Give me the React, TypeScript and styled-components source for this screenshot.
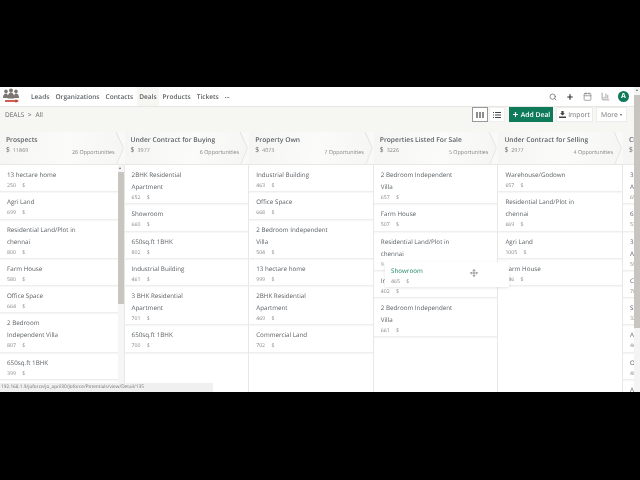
import React from "react";
import styled, { createGlobalStyle } from "styled-components";
import { Calendar, ChartColumn, Move, Plus, Search } from "lucide-react";

const GlobalStyle = createGlobalStyle`
  html, body { margin: 0; padding: 0; background: #000; }
  body {
    font-family: "Open Sans", "Liberation Sans", sans-serif;
    text-rendering: geometricPrecision;
  }
`;

const Page = styled.div`
  width: 640px;
  height: 480px;
  display: flex;
  flex-direction: column;
  background: #000;
  overflow: hidden;
`;

const Letterbox = styled.div<{ $height: number }>`
  height: ${(p) => p.$height}px;
  flex: none;
`;

const Screen = styled.div`
  position: relative;
  height: 305px;
  display: flex;
  background: #fff;
  overflow: hidden;
  color: #555;
  filter: blur(0.3px);
`;

const Main = styled.div`
  width: 634px;
  display: flex;
  flex-direction: column;
`;

const Nav = styled.div`
  height: 20px;
  display: flex;
  align-items: stretch;
  border-bottom: 1px solid #e6e6e2;
  box-sizing: border-box;
`;

const Logo = styled.svg`
  width: 18px;
  height: 16px;
  margin: 1px 9px 0 2px;
`;

const NavItem = styled.div<{ $active?: boolean }>`
  display: flex;
  align-items: center;
  padding: 0 2px;
  margin-right: 2px;
  font-size: 6.55px;
  font-weight: 600;
  color: #5a5f62;
  background: ${(p) => (p.$active ? "#f6f6f2" : "transparent")};
`;

const NavDots = styled(NavItem)`
  font-size: 4px;
  letter-spacing: 0.1px;
  padding-top: 3px;
`;

const NavIcons = styled.div`
  margin-left: auto;
  display: flex;
  align-items: center;
  gap: 9px;
  padding-right: 5px;
  color: #666;
`;

const Avatar = styled.div`
  width: 11px;
  height: 11px;
  margin-left: -1px;
  border-radius: 50%;
  background: #0f7a5a;
  color: #fff;
  font-size: 7px;
  font-weight: 700;
  display: flex;
  align-items: center;
  justify-content: center;
`;

const SubBar = styled.div`
  height: 20px;
  display: flex;
  align-items: center;
  padding: 0 7px 5px 5px;
  box-sizing: border-box;
  background: #f6f6f2;
  font-size: 6.5px;
  color: #666;
`;

const Crumb = styled.span`
  margin-right: 4px;
`;

const Actions = styled.div`
  margin-left: auto;
  display: flex;
  align-items: center;
`;

const ToggleButton = styled.div<{ $active?: boolean }>`
  width: 16px;
  height: 15px;
  margin-left: 1px;
  display: flex;
  align-items: center;
  justify-content: center;
  background: #fff;
  border: 1px solid ${(p) => (p.$active ? "#9a9a9a" : "#f0f0ec")};
  box-sizing: border-box;
  color: #444;
`;

const ActionButton = styled.div<{ $primary?: boolean; $width: number }>`
  width: ${(p) => p.$width}px;
  height: 15px;
  margin-left: ${(p) => (p.$primary ? 4 : 3)}px;
  box-sizing: border-box;
  display: flex;
  align-items: center;
  justify-content: center;
  gap: 2px;
  font-size: 6.8px;
  font-weight: ${(p) => (p.$primary ? 600 : 400)};
  color: ${(p) => (p.$primary ? "#fff" : "#777")};
  background: ${(p) => (p.$primary ? "#0f7a5a" : "#fff")};
  border: 1px solid ${(p) => (p.$primary ? "#0f7a5a" : "#ececea")};
`;

const Caret = styled.span`
  width: 0;
  height: 0;
  border-left: 1.5px solid transparent;
  border-right: 1.5px solid transparent;
  border-top: 2px solid #555;
`;

const Board = styled.div`
  flex: 1;
  min-height: 0;
  display: grid;
  grid-template-columns: repeat(6, 124.6px);
  grid-template-rows: 38px 1fr;
  overflow: hidden;
  background: #fff;
`;

const HeaderBand = styled.div`
  background: #f6f6f2;
  padding-top: 5px;
`;

const Header = styled.div`
  position: relative;
  box-sizing: border-box;
  height: 33px;
  padding: 3px 6px 0;
  background: linear-gradient(100deg, #f5f5f3 0%, #fbfbfa 55%, #f5f5f3 100%);
  border-bottom: 1px solid #e8e8e6;
`;

const HeaderTitle = styled.div`
  font-size: 6.7px;
  font-weight: 600;
  line-height: 9.5px;
  color: #5d6266;
  white-space: nowrap;
`;

const HeaderInfo = styled.div`
  display: flex;
  justify-content: space-between;
  align-items: flex-start;
  padding-right: 4px;
  color: #888;
  font-size: 5.4px;
  line-height: 10px;
  white-space: nowrap;
`;

const OpportunityCount = styled.span`
  margin-top: 2px;
`;

const Dollar = styled.span`
  font-size: 6.8px;
  margin-right: 3px;
  color: #666;
`;

const Chevron = styled.svg`
  position: absolute;
  top: 0;
  right: 0;
  width: 9px;
  height: 32px;
`;

const Column = styled.div<{ $last?: boolean }>`
  position: relative;
  min-width: 0;
  border-right: ${(p) => (p.$last ? "none" : "1px solid #e8e8e6")};
  overflow: hidden;
`;

const Card = styled.div<{ $inset?: boolean }>`
  padding: 4px 0 0 7px;
  margin-right: ${(p) => (p.$inset ? "6px" : "0")};
  border-bottom: 1px solid #eeeeec;
  box-shadow: 0 1px 1px rgba(0, 0, 0, 0.03);
  box-sizing: border-box;
`;

const CardTitle = styled.div`
  font-size: 6.25px;
  line-height: 12px;
  color: #5d6266;
  white-space: pre-line;
`;

const CardPrice = styled.div`
  font-size: 5.2px;
  line-height: 9px;
  height: 10.3px;
  color: #8a8a8a;
  word-spacing: 5px;
`;

const ScrollTrack = styled.div`
  position: absolute;
  top: 0;
  right: 0;
  width: 6px;
  height: 100%;
  background: #f6f6f6;
`;

const ScrollArrow = styled.div`
  position: absolute;
  top: 2px;
  left: 1.5px;
  width: 0;
  height: 0;
  border-left: 1.5px solid transparent;
  border-right: 1.5px solid transparent;
  border-bottom: 2px solid #666;
`;

const ScrollThumb = styled.div<{ $height: number; $top: number }>`
  margin-top: ${(p) => p.$top}px;
  height: ${(p) => p.$height}px;
  background: #c8c4c0;
`;

const PageScrollbar = styled.div`
  position: relative;
  width: 6px;
  background: #f4f4f4;
`;

const DragCard = styled.div`
  position: absolute;
  left: 385px;
  top: 175px;
  width: 124px;
  height: 25px;
  box-sizing: border-box;
  padding: 3px 0 0 6px;
  background: #fff;
  box-shadow: 0 1px 3px rgba(0, 0, 0, 0.1);
`;

const DragTitle = styled(CardTitle)`
  color: #1f8a64;
  font-weight: 500;
`;

const MoveMark = styled.div`
  position: absolute;
  right: 31px;
  top: 7px;
  color: #555;
  display: flex;
`;

const StatusBar = styled.div`
  position: absolute;
  left: 0;
  bottom: 0;
  width: 213px;
  height: 9px;
  padding-left: 1px;
  box-sizing: border-box;
  background: #f0f0f0;
  color: #777;
  font-size: 4.75px;
  line-height: 9px;
`;

type Deal = { title: string; price: string };

const columns: { name: string; total: string; count: string; deals: Deal[] }[] = [
  {
    name: "Prospects",
    total: "11869",
    count: "26 Opportunities",
    deals: [
      { title: "13 hectare home", price: "250 $" },
      { title: "Agri Land", price: "699 $" },
      { title: "Residential Land/Plot in\nchennai", price: "800 $" },
      { title: "Farm House", price: "580 $" },
      { title: "Office Space", price: "664 $" },
      { title: "2 Bedroom\nIndependent Villa", price: "807 $" },
      { title: "650sq.ft 1BHK", price: "399 $" },
    ],
  },
  {
    name: "Under Contract for Buying",
    total: "3977",
    count: "6 Opportunities",
    deals: [
      { title: "2BHK Residential\nApartment", price: "652 $" },
      { title: "Showroom", price: "660 $" },
      { title: "650sq.ft 1BHK", price: "802 $" },
      { title: "Industrial Building", price: "461 $" },
      { title: "3 BHK Residential\nApartment", price: "701 $" },
      { title: "650sq.ft 1BHK", price: "700 $" },
    ],
  },
  {
    name: "Property Own",
    total: "4073",
    count: "7 Opportunities",
    deals: [
      { title: "Industrial Building", price: "463 $" },
      { title: "Office Space", price: "668 $" },
      { title: "2 Bedroom Independent\nVilla", price: "504 $" },
      { title: "13 hectare home", price: "999 $" },
      { title: "2BHK Residential\nApartment", price: "469 $" },
      { title: "Commercial Land", price: "702 $" },
    ],
  },
  {
    name: "Properties Listed For Sale",
    total: "3226",
    count: "5 Opportunities",
    deals: [
      { title: "2 Bedroom Independent\nVilla", price: "657 $" },
      { title: "Farm House", price: "507 $" },
      { title: "Residential Land/Plot in\nchennai", price: "9" },
      { title: "Industrial Building", price: "402 $" },
      { title: "2 Bedroom Independent\nVilla", price: "661 $" },
    ],
  },
  {
    name: "Under Contract for Selling",
    total: "2977",
    count: "4 Opportunities",
    deals: [
      { title: "Warehouse/Godown", price: "657 $" },
      { title: "Residential Land/Plot in\nchennai", price: "669 $" },
      { title: "Agri Land", price: "1005 $" },
      { title: "Farm House", price: "346 $" },
    ],
  },
  {
    name: "Closed",
    total: "5210",
    count: "9 Opportunities",
    deals: [
      { title: "3 BHK Residential\nApartment", price: "651 $" },
      { title: "650sq.ft 1BHK", price: "530 $" },
      { title: "3 BHK Residential\nApartment", price: "590 $" },
      { title: "Commercial Land", price: "702 $" },
      { title: "Showroom", price: "320 $" },
      { title: "Agri Land", price: "466 $" },
      { title: "Office Space", price: "489 $" },
      { title: "Agri Land", price: "410 $" },
    ],
  },
];

const navItems = ["Leads", "Organizations", "Contacts", "Deals", "Products", "Tickets"];

export default function App() {
  return (
    <Page>
      <GlobalStyle />
      <Letterbox $height={87} />
      <Screen>
        <Main>
          <Nav>
            <Logo viewBox="0 0 18 16">
              <g fill="#7d7673">
                <circle cx="4" cy="3.4" r="1.8" />
                <circle cx="9" cy="2.6" r="2" />
                <circle cx="14" cy="3.4" r="1.8" />
                <path d="M1 10c0-3 1.2-4.6 3-4.6S6 7 6 10zM5.6 10.4c0-3.6 1.3-6 3.4-6s3.4 2.4 3.4 6zM12 10c0-3 .2-4.6 2-4.6s3 1.6 3 4.6z" />
              </g>
              <path d="M3 13h11" stroke="#c0392b" strokeWidth="1.6" />
              <path d="M13.5 11.2 17 13l-3.5 1.8z" fill="#c0392b" />
            </Logo>
            {navItems.map((item) => (
              <NavItem key={item} $active={item === "Deals"}>
                {item}
              </NavItem>
            ))}
            <NavDots>•••</NavDots>
            <NavIcons>
              <Search size={8} strokeWidth={2.2} />
              <Plus size={8} strokeWidth={3.4} color="#333" />
              <Calendar size={9} color="#888" />
              <ChartColumn size={9} color="#888" />
              <Avatar>A</Avatar>
            </NavIcons>
          </Nav>
          <SubBar>
            <Crumb>DEALS &nbsp;&gt;</Crumb>
            <span>All</span>
            <Actions>
              <ToggleButton $active>
                <svg width="8" height="8" viewBox="0 0 8 8">
                  <path d="M1 1v6M4 1v6M7 1v6" stroke="#444" strokeWidth="1.2" />
                </svg>
              </ToggleButton>
              <ToggleButton>
                <svg width="8" height="8" viewBox="0 0 8 8">
                  <path d="M0 1.5h1M2 1.5h6M0 4h1M2 4h6M0 6.5h1M2 6.5h6" stroke="#444" strokeWidth="1" />
                </svg>
              </ToggleButton>
              <ActionButton $primary $width={44}>
                <Plus size={7} strokeWidth={4} />
                Add Deal
              </ActionButton>
              <ActionButton $width={37}>
                <svg width="7" height="7" viewBox="0 0 7 7">
                  <path d="M2.4 0h2.2v2.2H6L3.5 4.6 1 2.2h1.4zM0 5.4h7V7H0z" fill="#444" />
                </svg>
                Import
              </ActionButton>
              <ActionButton $width={31}>
                More
                <Caret />
              </ActionButton>
            </Actions>
          </SubBar>
          <Board>
            {columns.map((col) => (
              <HeaderBand key={col.name}>
                <Header>
                  <HeaderTitle>{col.name}</HeaderTitle>
                  <HeaderInfo>
                    <span>
                      <Dollar>$</Dollar>
                      {col.total}
                    </span>
                    <OpportunityCount>{col.count}</OpportunityCount>
                  </HeaderInfo>
                  <Chevron viewBox="0 0 9 32">
                    <path d="M0 0 7.5 16 1 32" fill="none" stroke="#dcdcda" strokeWidth="0.8" />
                    <path d="M1 0H9V32H1L7.5 16z" fill="#fff" opacity="0.4" />
                  </Chevron>
                </Header>
              </HeaderBand>
            ))}
            {columns.map((col, i) => (
              <Column key={col.name} $last={i === columns.length - 1}>
                {col.deals.map((deal, j) => (
                  <Card key={j} $inset={i === 0}>
                    <CardTitle>{deal.title}</CardTitle>
                    <CardPrice>{deal.price}</CardPrice>
                  </Card>
                ))}
                {i === 0 && (
                  <ScrollTrack>
                    <ScrollArrow />
                    <ScrollThumb $top={7} $height={132} />
                  </ScrollTrack>
                )}
              </Column>
            ))}
          </Board>
        </Main>
        <PageScrollbar>
          <ScrollArrow />
          <ScrollThumb $top={8} $height={233} />
        </PageScrollbar>
        <DragCard>
          <DragTitle>Showroom</DragTitle>
          <CardPrice>465 $</CardPrice>
          <MoveMark>
            <Move size={8} strokeWidth={1.6} />
          </MoveMark>
        </DragCard>
        <StatusBar>192.168.1.9/joforce/jo_april30/Joforce/Potentials/view/Detail/135</StatusBar>
      </Screen>
      <Letterbox $height={88} />
    </Page>
  );
}
